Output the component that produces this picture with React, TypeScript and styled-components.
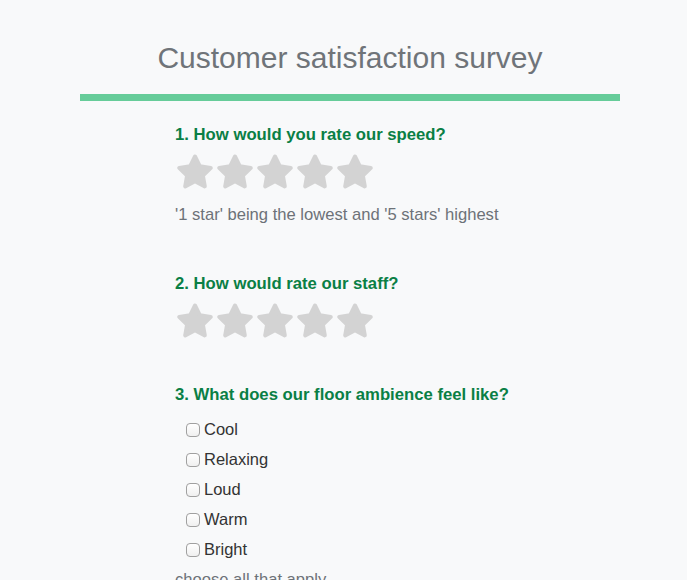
import React from "react";
import styled, { createGlobalStyle } from "styled-components";

const Global = createGlobalStyle`
  html, body { margin: 0; padding: 0; background: #f8f9fa; overflow: hidden; }
  body { font-family: "Liberation Sans", Arial, sans-serif; }
`;

const Page = styled.div`
  width: 540px;
  margin-left: 80px;
  padding-top: 40px;
`;

const Title = styled.h1`
  margin: 0;
  font-size: 30px;
  line-height: 36px;
  font-weight: 400;
  color: #6f7479;
  text-align: center;
`;

const Bar = styled.div`
  height: 7px;
  margin-top: 18px;
  background: #66cc99;
`;

const Body = styled.div`
  padding-left: 95px;
  padding-top: 24px;
`;

const Question = styled.section<{ $gap: number }>`
  margin-bottom: ${(p) => p.$gap}px;
`;

const QTitle = styled.h3`
  margin: 0;
  font-size: 16.7px;
  line-height: 20px;
  font-weight: 700;
  color: #0a7f45;
`;

const Stars = styled.div`
  display: flex;
  margin-top: 8px;
`;

const Hint = styled.div<{ $top: number }>`
  margin-top: ${(p) => p.$top}px;
  font-size: 16.6px;
  line-height: 20px;
  color: #6d7278;
`;

const Options = styled.div`
  display: flex;
  flex-direction: column;
  margin-top: 9px;
  padding-left: 11px;
`;

const Option = styled.label`
  display: flex;
  align-items: center;
  height: 30px;
  font-size: 16.5px;
  color: #333;
`;

const Box = styled.span`
  width: 14px;
  height: 14px;
  border: 1px solid #a0a0a0;
  border-radius: 4px;
  background: linear-gradient(#ffffff, #f0f0f0);
  margin-right: 4px;
  margin-top: 2px;
  box-sizing: border-box;
`;

const StarSvg = styled.svg`
  width: 40px;
  height: 38px;
  display: block;
`;

const Star = () => (
  <StarSvg viewBox="0 0 40 38">
    <polygon
      points="20,3.5 24.9,13.3 35.8,14.9 27.9,22.6 29.8,33.4 20,28.3 10.2,33.4 12.1,22.6 4.2,14.9 15.1,13.3"
      fill="#d3d3d3"
      stroke="#d3d3d3"
      strokeWidth="4"
      strokeLinejoin="round"
    />
  </StarSvg>
);

const StarRow = () => (
  <Stars>
    {[0, 1, 2, 3, 4].map((i) => (
      <Star key={i} />
    ))}
  </Stars>
);

export default function App() {
  return (
    <>
      <Global />
      <Page>
        <Title>Customer satisfaction survey</Title>
        <Bar />
        <Body>
          <Question $gap={49}>
            <QTitle>1. How would you rate our speed?</QTitle>
            <StarRow />
            <Hint $top={14}>'1 star' being the lowest and '5 stars' highest</Hint>
          </Question>
          <Question $gap={45}>
            <QTitle>2. How would rate our staff?</QTitle>
            <StarRow />
          </Question>
          <Question $gap={0}>
            <QTitle>3. What does our floor ambience feel like?</QTitle>
            <Options>
              {["Cool", "Relaxing", "Loud", "Warm", "Bright"].map((o) => (
                <Option key={o}>
                  <Box />
                  {o}
                </Option>
              ))}
            </Options>
            <Hint $top={6}>choose all that apply</Hint>
          </Question>
        </Body>
      </Page>
    </>
  );
}
